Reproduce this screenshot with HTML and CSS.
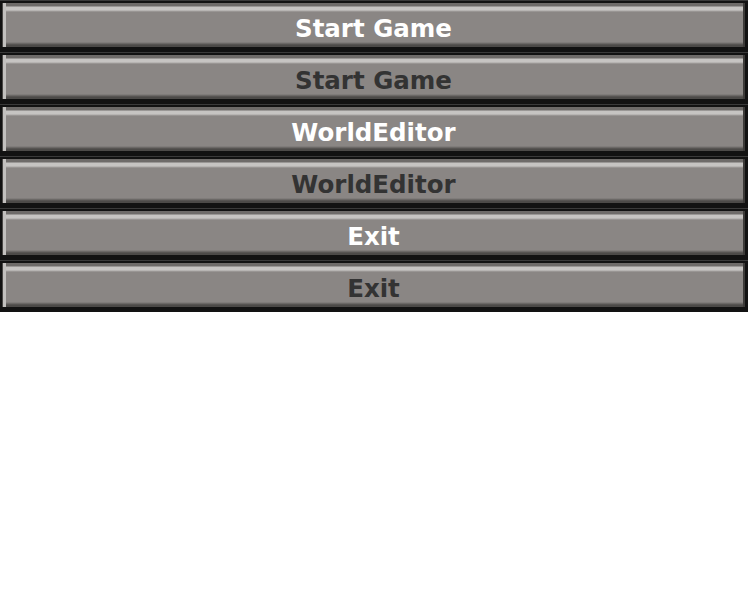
FILE: index.html
```html
<!DOCTYPE html>
<html>
<head>
<meta charset="utf-8">
<link rel="stylesheet" href="styles.css">
</head>
<body>
<div class="menu">
  <div class="btn"><div class="face light">Start Game</div></div>
  <div class="btn"><div class="face dark">Start Game</div></div>
  <div class="btn"><div class="face light">WorldEditor</div></div>
  <div class="btn"><div class="face dark">WorldEditor</div></div>
  <div class="btn"><div class="face light">Exit</div></div>
  <div class="btn"><div class="face dark">Exit</div></div>
</div>
</body>
</html>
```
FILE: styles.css
```css
html, body { margin: 0; padding: 0; background: #fff; }
.menu { width: 748px; display: flex; flex-direction: column; }
.btn {
  height: 52px;
  box-sizing: border-box;
  background: #121212;
  padding: 2px 3px 5px 2px;
  border-top: 1px solid #3a3a3a;
}
.face {
  height: 100%;
  box-sizing: border-box;
  padding-top: 7px;
  background: linear-gradient(to bottom,
    #6e6b69 0, #6e6b69 3px,
    #c6c4c2 4px, #c6c4c2 7px,
    #8a8684 9px, #8a8684 calc(100% - 5px),
    #4c4a48 calc(100% - 2px));
  box-shadow: inset 1px 0 0 #4a4846, inset 4px 0 0 #c2c0be, inset -2px 0 0 #3c3a38;
  display: flex;
  align-items: center;
  justify-content: center;
  font-family: "DejaVu Sans", sans-serif;
  font-weight: bold;
  font-size: 24.5px;
}
.light { color: #fff; }
.dark { color: #333; }
```
